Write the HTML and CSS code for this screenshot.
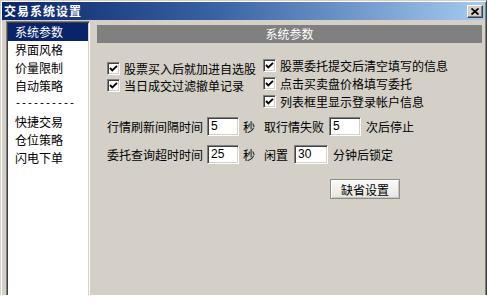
FILE: index.html
```html
<!DOCTYPE html>
<html lang="zh-CN">
<head>
<meta charset="utf-8">
<title>交易系统设置</title>
<link rel="stylesheet" href="styles.css">
</head>
<body>
<div class="window">
  <div class="titlebar">
    <span class="title">交易系统设置</span>
    <span class="close"><svg width="8" height="7" viewBox="0 0 8 7"><path d="M0.5 0.5 L7.5 6.5 M7.5 0.5 L0.5 6.5" stroke="#000" stroke-width="1.8" fill="none"/></svg></span>
  </div>
  <div class="body">
    <ul class="nav">
      <li class="sel">系统参数</li>
      <li>界面风格</li>
      <li>价量限制</li>
      <li>自动策略</li>
      <li class="sep">----------</li>
      <li>快捷交易</li>
      <li>仓位策略</li>
      <li>闪电下单</li>
    </ul>
    <div class="panel">
      <div class="header">系统参数</div>
      <div class="checks">
        <div class="col col1">
          <div class="chk"><span class="box"><svg width="9" height="9" viewBox="0 0 9 9"><path d="M1 4 L3.3 6.5 L8 1.8" stroke="#000" stroke-width="1.9" fill="none"/></svg></span><span>股票买入后就加进自选股</span></div>
          <div class="chk"><span class="box"><svg width="9" height="9" viewBox="0 0 9 9"><path d="M1 4 L3.3 6.5 L8 1.8" stroke="#000" stroke-width="1.9" fill="none"/></svg></span><span>当日成交过滤撤单记录</span></div>
        </div>
        <div class="col col2">
          <div class="chk"><span class="box"><svg width="9" height="9" viewBox="0 0 9 9"><path d="M1 4 L3.3 6.5 L8 1.8" stroke="#000" stroke-width="1.9" fill="none"/></svg></span><span>股票委托提交后清空填写的信息</span></div>
          <div class="chk"><span class="box"><svg width="9" height="9" viewBox="0 0 9 9"><path d="M1 4 L3.3 6.5 L8 1.8" stroke="#000" stroke-width="1.9" fill="none"/></svg></span><span>点击买卖盘价格填写委托</span></div>
          <div class="chk"><span class="box"><svg width="9" height="9" viewBox="0 0 9 9"><path d="M1 4 L3.3 6.5 L8 1.8" stroke="#000" stroke-width="1.9" fill="none"/></svg></span><span>列表框里显示登录帐户信息</span></div>
        </div>
      </div>
      <div class="form-row row1">
        <span class="lbl">行情刷新间隔时间</span>
        <span class="input">5</span>
        <span class="unit">秒</span>
        <span class="lbl2">取行情失败</span>
        <span class="input">5</span>
        <span class="unit2">次后停止</span>
      </div>
      <div class="form-row row2">
        <span class="lbl">委托查询超时时间</span>
        <span class="input">25</span>
        <span class="unit">秒</span>
        <span class="lbl3">闲置</span>
        <span class="input wide">30</span>
        <span class="unit2">分钟后锁定</span>
      </div>
      <div class="btn-row"><span class="btn">缺省设置</span></div>
    </div>
  </div>
</div>
</body>
</html>
```

FILE: styles.css
```css
html, body {
  margin: 0;
  padding: 0;
  background: #ffffff;
}

body {
  font-family: "Noto Sans CJK SC", "Noto Sans", sans-serif;
  font-size: 12px;
  color: #000;
}

.window {
  box-sizing: border-box;
  width: 487px;
  height: 295px;
  background: #d4d0c8;
  border-top: 1px solid #d4d0c8;
  border-left: 1px solid #d4d0c8;
  border-right: 1px solid #404040;
  padding: 1px 1px 0 1px;
  box-shadow: inset 1px 1px 0 #ffffff, inset -1px 0 0 #808080;
  display: flex;
  flex-direction: column;
  overflow: hidden;
}

.titlebar {
  height: 18px;
  flex: none;
  display: flex;
  align-items: center;
  justify-content: space-between;
  padding: 0 2px 0 2px;
  background: linear-gradient(to right, #0a246a 0%, #3a64a4 45%, #a6caf0 100%);
}

.title {
  color: #ffffff;
  font-weight: bold;
  font-size: 12px;
  letter-spacing: 1px;
  line-height: 18px;
}

.close {
  box-sizing: border-box;
  width: 16px;
  height: 13px;
  background: #d4d0c8;
  border-top: 1px solid #ffffff;
  border-left: 1px solid #ffffff;
  border-right: 1px solid #404040;
  border-bottom: 1px solid #404040;
  box-shadow: inset -1px -1px 0 #808080;
  display: flex;
  align-items: center;
  justify-content: center;
}

.body {
  flex: 1;
  display: flex;
  padding: 1px 0 0 4px;
  min-height: 0;
}

.nav {
  box-sizing: border-box;
  list-style: none;
  margin: 0;
  padding: 1px 0 0 0;
  width: 84px;
  flex: none;
  background: #ffffff;
  border-top: 1px solid #808080;
  border-left: 1px solid #808080;
  border-right: 1px solid #ffffff;
  box-shadow: inset 1px 1px 0 #404040, inset -1px 0 0 #d4d0c8;
}

.nav li {
  height: 18px;
  line-height: 18px;
  padding-left: 7px;
  margin-left: 1px;
  margin-right: 1px;
  white-space: nowrap;
}

.nav li.sel {
  background: #0a246a;
  color: #ffffff;
}

.nav li.sep {
  font-family: "Liberation Mono", monospace;
  font-size: 10px;
}

.panel {
  flex: 1;
  padding: 4px 3px 0 7px;
}

.header {
  height: 18px;
  line-height: 18px;
  background: #808080;
  color: #ffffff;
  text-align: center;
}

.checks {
  display: flex;
  align-items: flex-start;
  margin-top: 13px;
  padding-left: 10px;
}

.col1 {
  width: 156px;
  margin-top: 4px;
}

.col1 .chk {
  height: 17px;
}

.col2 .chk {
  height: 18px;
}

.chk {
  display: flex;
  align-items: center;
  white-space: nowrap;
}

.box {
  box-sizing: border-box;
  width: 13px;
  height: 13px;
  flex: none;
  margin-right: 4px;
  background: #ffffff;
  border-top: 1px solid #808080;
  border-left: 1px solid #808080;
  border-right: 1px solid #ffffff;
  border-bottom: 1px solid #ffffff;
  box-shadow: inset 1px 1px 0 #404040, inset -1px -1px 0 #d4d0c8;
  display: flex;
  align-items: center;
  justify-content: center;
}

.form-row {
  display: flex;
  align-items: center;
  height: 20px;
  padding-left: 10px;
  white-space: nowrap;
}

.row1 {
  margin-top: 6px;
}

.row2 {
  margin-top: 8px;
}

.lbl {
  width: 96px;
  margin-right: 4px;
}

.input {
  box-sizing: border-box;
  width: 32px;
  height: 19px;
  background: #ffffff;
  border-top: 1px solid #808080;
  border-left: 1px solid #808080;
  border-right: 1px solid #ffffff;
  border-bottom: 1px solid #ffffff;
  box-shadow: inset 1px 1px 0 #404040, inset -1px -1px 0 #d4d0c8;
  font-family: "Liberation Sans", sans-serif;
  font-size: 12px;
  line-height: 17px;
  padding-left: 3px;
}

.input.wide {
  width: 34px;
}

.unit {
  margin-left: 4px;
  margin-right: 9px;
}

.lbl2 {
  margin-right: 5px;
}

.lbl3 {
  margin-right: 6px;
}

.unit2 {
  margin-left: 5px;
}

.btn-row {
  display: flex;
  margin-top: 15px;
  padding-left: 233px;
}

.btn {
  box-sizing: border-box;
  width: 70px;
  height: 20px;
  display: flex;
  align-items: center;
  justify-content: center;
  background: linear-gradient(#fbfbfa, #e6e4df);
  border: 1px solid #8e8c87;
  box-shadow: inset 1px 1px 0 #ffffff, inset -1px -1px 0 #c9c6bf;
  font-size: 12px;
}
```
